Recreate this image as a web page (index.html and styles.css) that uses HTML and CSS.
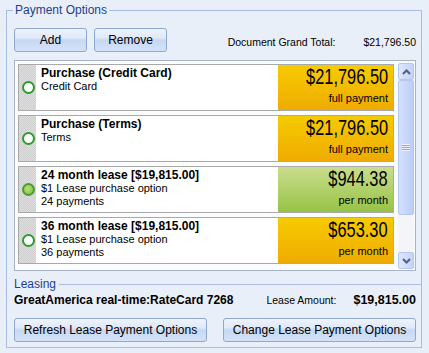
FILE: index.html
```html
<!DOCTYPE html>
<html lang="en">
<head>
    <meta charset="UTF-8">
    <title>Payment Options</title>
    <link rel="stylesheet" href="styles.css">
</head>
<body>
<fieldset class="group">
    <legend>Payment Options</legend>

    <div class="toolbar">
        <button class="btn btn-small">Add</button>
        <button class="btn btn-small">Remove</button>
        <div class="grand-total">
            <span>Document Grand Total:</span>
            <span>$21,796.50</span>
        </div>
    </div>

    <div class="listbox">
        <div class="options" id="options"></div>
        <div class="scrollbar">
            <div class="sb-btn sb-up">
                <svg width="9" height="6" viewBox="0 0 9 6"><path d="M1 5 L4.5 1.5 L8 5" fill="none" stroke="#4d6185" stroke-width="2"/></svg>
            </div>
            <div class="sb-thumb"><span class="grip"></span></div>
            <div class="sb-track"></div>
            <div class="sb-btn sb-down">
                <svg width="9" height="6" viewBox="0 0 9 6"><path d="M1 1 L4.5 4.5 L8 1" fill="none" stroke="#4d6185" stroke-width="2"/></svg>
            </div>
        </div>
    </div>

    <div class="leasing-head">
        <span>Leasing</span>
        <div class="rule"></div>
    </div>
    <div class="leasing-row">
        <span class="provider">GreatAmerica real-time:RateCard 7268</span>
        <span class="lease-label">Lease Amount:</span>
        <span class="lease-amount">$19,815.00</span>
    </div>
    <div class="actions">
        <button class="btn btn-wide">Refresh Lease Payment Options</button>
        <button class="btn btn-wide">Change Lease Payment Options</button>
    </div>
</fieldset>

<script>
    const options = [
        { title: 'Purchase (Credit Card)', lines: ['Credit Card'], price: '$21,796.50', note: 'full payment', selected: false },
        { title: 'Purchase (Terms)', lines: ['Terms'], price: '$21,796.50', note: 'full payment', selected: false },
        { title: '24 month lease [$19,815.00]', lines: ['$1 Lease purchase option', '24 payments'], price: '$944.38', note: 'per month', selected: true },
        { title: '36 month lease [$19,815.00]', lines: ['$1 Lease purchase option', '36 payments'], price: '$653.30', note: 'per month', selected: false }
    ];

    function renderOptions() {
        const list = document.getElementById('options');
        list.innerHTML = '';
        options.forEach(opt => {
            const card = document.createElement('div');
            card.className = 'card' + (opt.selected ? ' selected' : '');
            card.innerHTML = `
                <div class="strip"><span class="radio"></span></div>
                <div class="info">
                    <div class="title">${opt.title}</div>
                    ${opt.lines.map(l => `<div class="line">${l}</div>`).join('')}
                </div>
                <div class="price">
                    <div class="amount">${opt.price}</div>
                    <div class="note">${opt.note}</div>
                </div>
            `;
            list.appendChild(card);
        });
    }

    renderOptions();
</script>
</body>
</html>
```

FILE: styles.css
```css
:root {
    --bg: #e9eff9;
    --frame: #a7bde2;
    --label: #1d3f8c;
    --card-border: #a9a9a9;
}

body {
    margin: 0;
    background: var(--bg);
    font-family: "Liberation Sans", Arial, sans-serif;
    font-size: 11px;
    color: #000;
}

.group {
    margin: 3px 7px 0 6px;
    padding: 11px 5px 5px 7px;
    border: 1px solid var(--frame);
}

.group legend {
    padding: 0 2px;
    margin-left: -1px;
    font-size: 12px;
    line-height: 14px;
    color: var(--label);
}

.btn {
    font-family: "Liberation Sans", Arial, sans-serif;
    font-size: 12px;
    color: #000;
    height: 24px;
    border: 1px solid #8ea8d0;
    border-radius: 3px;
    background: linear-gradient(#eef3fc 0%, #dfe9f9 40%, #c6d8f4 50%, #d4e2f7 100%);
    padding: 0;
    cursor: pointer;
}

.toolbar {
    display: flex;
    align-items: center;
    gap: 7px;
    height: 24px;
}

.btn-small {
    width: 73px;
}

.grand-total {
    margin-left: auto;
    display: flex;
    gap: 28px;
    padding-top: 4px;
    font-size: 10.5px;
}

.listbox {
    margin-top: 8px;
    height: 211px;
    box-sizing: border-box;
    border: 1px solid #a8b4c6;
    background: #fbfcfe;
    display: flex;
}

.options {
    flex: 1;
    padding: 3px 2px 0 3px;
    display: flex;
    flex-direction: column;
    gap: 4px;
    overflow: hidden;
}

.card {
    height: 47px;
    flex: none;
    box-sizing: border-box;
    border: 1px solid var(--card-border);
    background: #fff;
    display: flex;
}

.strip {
    width: 17px;
    background-color: #d9d9d9;
    background-image: repeating-conic-gradient(#cfcfcf 0 25%, #dedede 0 50%);
    background-size: 2px 2px;
    display: flex;
    align-items: center;
    justify-content: center;
}

.radio {
    width: 9px;
    height: 9px;
    border-radius: 50%;
    border: 2px solid #2f9a2f;
    background: #fff;
    margin-left: 1px;
}

.selected .radio {
    border-color: #4f9a2c;
    background: radial-gradient(circle at 40% 40%, #b5e07a, #7fbd3a);
}

.info {
    flex: 1;
    padding: 2px 0 0 5px;
    line-height: 13px;
}

.title {
    font-weight: bold;
    font-size: 12px;
}

.price {
    width: 115px;
    padding: 1px 5px 0 0;
    box-sizing: border-box;
    display: flex;
    flex-direction: column;
    align-items: flex-end;
    background: linear-gradient(#f6cb00, #efab00);
}

.selected .price {
    background: linear-gradient(#c9de8c, #97c247);
}

.amount {
    font-size: 22px;
    line-height: 22px;
    transform: scaleX(0.745);
    transform-origin: right center;
}

.note {
    margin-top: 4px;
    line-height: 13px;
}

.scrollbar {
    width: 16px;
    margin: 2px 1px 1px 2px;
    display: flex;
    flex-direction: column;
}

.sb-btn {
    height: 17px;
    box-sizing: border-box;
    border: 1px solid #b4c7ee;
    border-radius: 2px;
    background: linear-gradient(90deg, #dfe8fd, #c3d3fb);
    display: flex;
    align-items: center;
    justify-content: center;
}

.sb-thumb {
    height: 135px;
    box-sizing: border-box;
    border: 1px solid #b4c7ee;
    border-radius: 2px;
    background: linear-gradient(90deg, #d4e0fd, #bccdf8);
    display: flex;
    align-items: center;
    justify-content: center;
}

.grip {
    width: 8px;
    height: 7px;
    background: repeating-linear-gradient(#eef3fe 0 1px, #8fa7d8 1px 2px);
}

.sb-track {
    flex: 1;
    background: #f4f5f8;
}

.leasing-head {
    margin-top: 6px;
    display: flex;
    align-items: center;
    height: 14px;
    font-size: 12px;
    color: var(--label);
    margin-right: -5px;
}

.leasing-head .rule {
    flex: 1;
    height: 1px;
    background: var(--frame);
    margin-left: 3px;
}

.leasing-row {
    margin-top: 2px;
    display: flex;
    align-items: center;
    height: 14px;
    font-size: 10.5px;
}

.provider {
    font-weight: bold;
    font-size: 12px;
}

.lease-label {
    margin-left: auto;
}

.lease-amount {
    margin-left: 17px;
    font-weight: bold;
    font-size: 12.5px;
}

.actions {
    margin-top: 11px;
    display: flex;
    justify-content: space-between;
}

.btn-wide {
    width: 193px;
}
```
